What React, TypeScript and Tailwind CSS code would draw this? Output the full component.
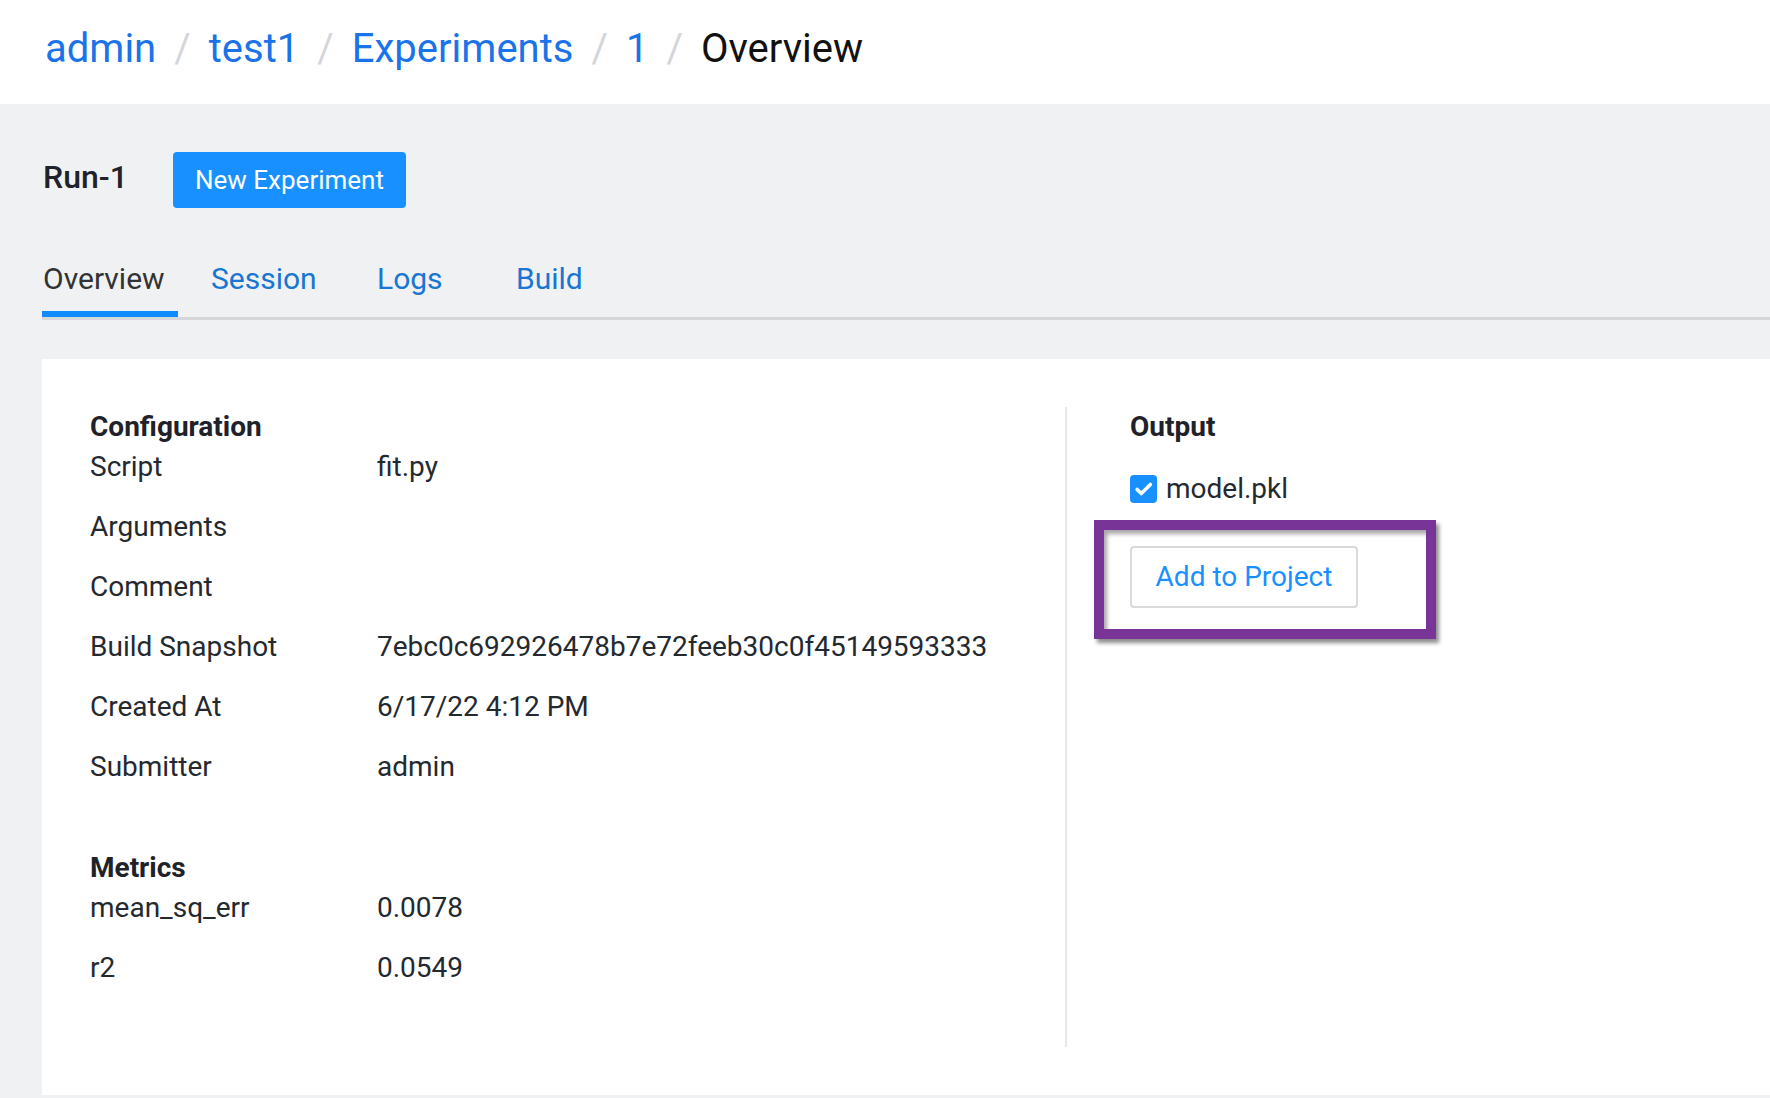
import React from "react";

const crumbs = ["admin", "test1", "Experiments", "1"];

const configRows: [string, string][] = [
    ["Script", "fit.py"],
    ["Arguments", ""],
    ["Comment", ""],
    ["Build Snapshot", "7ebc0c692926478b7e72feeb30c0f45149593333"],
    ["Created At", "6/17/22 4:12 PM"],
    ["Submitter", "admin"],
];

const metricRows: [string, string][] = [
    ["mean_sq_err", "0.0078"],
    ["r2", "0.0549"],
];

const Row = ({ label, value }: { label: string; value: string }) => (
    <div className="flex text-[28px] leading-[39px] text-[#24292f] pt-[1px] mb-[20px]">
        <span className="w-[287px] shrink-0">{label}</span>
        <span>{value}</span>
    </div>
);

export default function App() {
    return (
        <div className="min-h-[1098px] bg-[#f0f1f3] font-['Roboto',sans-serif]">
            {/* Breadcrumb */}
            <div className="h-[104px] bg-white flex items-center pl-[45px] pb-[7px] text-[40px] leading-[48px]">
                {crumbs.map((c) => (
                    <React.Fragment key={c}>
                        <span className="text-[#1a73e8]">{c}</span>
                        <span className="text-[#d4d6da] mx-[18px]">/</span>
                    </React.Fragment>
                ))}
                <span className="text-[#111]">Overview</span>
            </div>

            <div className="pl-[42px] pb-[3px]">
                {/* Title row */}
                <div className="flex items-center pt-[48px]">
                    <span className="text-[32px] font-medium text-[#1f2329] ml-[1px] w-[130px] pb-[7px]">Run-1</span>
                    <button className="h-[56px] w-[233px] rounded-[4px] bg-[#1890ff] text-white text-[26px]">
                        New Experiment
                    </button>
                </div>

                {/* Tabs */}
                <div className="flex mt-[51px] border-b-[3px] border-[#d6d7da] text-[30px] leading-[40px]">
                    <div className="w-[136px] pl-[1px] pb-[12px] border-b-[6px] border-[#0f8bff] text-[#333]">
                        Overview
                    </div>
                    <div className="ml-[33px] w-[166px] pb-[12px] text-[#1976d2]">Session</div>
                    <div className="w-[139px] pb-[12px] text-[#1976d2]">Logs</div>
                    <div className="pb-[12px] text-[#1976d2]">Build</div>
                </div>

                {/* Panel */}
                <div className="mt-[39px] bg-white flex pt-[48px] pb-[48px] pl-[48px] min-h-[736px]">
                    <div className="w-[975px] shrink-0">
                        <div className="text-[28px] leading-[39px] font-bold text-[#1f2329]">Configuration</div>
                        {configRows.map(([l, v]) => (
                            <Row key={l} label={l} value={v} />
                        ))}
                        <div className="mt-[62px] text-[28px] leading-[39px] font-bold text-[#1f2329]">Metrics</div>
                        {metricRows.map(([l, v]) => (
                            <Row key={l} label={l} value={v} />
                        ))}
                    </div>

                    <div className="border-l-2 border-[#e6e7e9] pl-[63px] h-[640px]">
                        <div className="text-[28px] leading-[39px] font-bold text-[#1f2329]">Output</div>
                        <div className="mt-[23px] flex items-center gap-[9px] text-[28px] leading-[39px] text-[#24292f]">
                            <span className="w-[27px] h-[28px] rounded-[4px] bg-[#1890ff] flex items-center justify-center">
                                <svg width="22" height="22" viewBox="0 0 24 24" fill="none">
                                    <path d="M4.5 12.5l4.5 4.5 10-10" stroke="white" strokeWidth="3.8" strokeLinecap="round" strokeLinejoin="round" />
                                </svg>
                            </span>
                            <span>model.pkl</span>
                        </div>
                        <div className="relative mt-[38px] w-[228px]">
                            <button className="w-[228px] h-[62px] border-2 border-[#d9d9d9] rounded-[4px] text-[28px] text-[#1890ff] bg-white">
                                Add to Project
                            </button>
                            {/* annotation highlight */}
                            <div className="absolute left-[-36px] top-[-26px] w-[342px] h-[119px] border-[10px] border-[#783597] shadow-[3px_4px_4px_rgba(0,0,0,0.45),inset_3px_4px_4px_rgba(0,0,0,0.35)] pointer-events-none" />
                        </div>
                    </div>
                </div>
            </div>
        </div>
    );
}
